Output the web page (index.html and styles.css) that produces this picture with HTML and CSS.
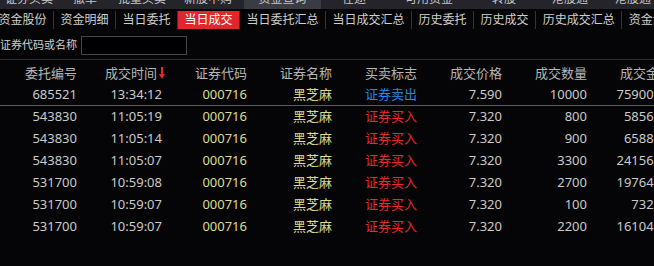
FILE: index.html
```html
<!DOCTYPE html>
<html lang="zh-CN">
<head>
<meta charset="utf-8">
<title>当日成交</title>
<link rel="stylesheet" href="styles.css">
</head>
<body>
<div class="topbar">
  <div class="top-item w58">证券买卖</div>
  <div class="top-item w54">撤单</div>
  <div class="top-item w60">批量买卖</div>
  <div class="top-item w72">新股申购</div>
  <div class="top-item w77 active">资金查询</div>
  <div class="top-item w66">在途</div>
  <div class="top-item w84">可用资金</div>
  <div class="top-item w66">转股</div>
  <div class="top-item w66">港股通</div>
  <div class="top-item w60">港股通</div>
</div>
<div class="tabs">
  <div class="tab">资金股份</div>
  <div class="tab">资金明细</div>
  <div class="tab">当日委托</div>
  <div class="tab active">当日成交</div>
  <div class="tab">当日委托汇总</div>
  <div class="tab">当日成交汇总</div>
  <div class="tab">历史委托</div>
  <div class="tab">历史成交</div>
  <div class="tab">历史成交汇总</div>
  <div class="tab">资金流水</div>
</div>
<div class="search">
  <span class="search-label">证券代码或名称</span>
  <input class="search-input" type="text">
</div>
<div class="grid">
  <div class="row head">
    <div class="cell">委托编号</div>
    <div class="cell">成交时间<svg class="sort" width="6" height="12" viewBox="0 0 6 12"><rect x="2" y="0" width="2" height="8" fill="#e8262a"/><polygon points="0,7 6,7 3,12" fill="#e8262a"/></svg></div>
    <div class="cell">证券代码</div>
    <div class="cell">证券名称</div>
    <div class="cell">买卖标志</div>
    <div class="cell">成交价格</div>
    <div class="cell">成交数量</div>
    <div class="cell">成交金额</div>
  </div>
  <div class="row cur">
    <div class="cell">685521</div><div class="cell">13:34:12</div><div class="cell y">000716</div><div class="cell y">黑芝麻</div><div class="cell sell">证券卖出</div><div class="cell">7.590</div><div class="cell">10000</div><div class="cell">75900.00</div>
  </div>
  <div class="row">
    <div class="cell">543830</div><div class="cell">11:05:19</div><div class="cell y">000716</div><div class="cell y">黑芝麻</div><div class="cell buy">证券买入</div><div class="cell">7.320</div><div class="cell">800</div><div class="cell">5856.00</div>
  </div>
  <div class="row">
    <div class="cell">543830</div><div class="cell">11:05:14</div><div class="cell y">000716</div><div class="cell y">黑芝麻</div><div class="cell buy">证券买入</div><div class="cell">7.320</div><div class="cell">900</div><div class="cell">6588.00</div>
  </div>
  <div class="row">
    <div class="cell">543830</div><div class="cell">11:05:07</div><div class="cell y">000716</div><div class="cell y">黑芝麻</div><div class="cell buy">证券买入</div><div class="cell">7.320</div><div class="cell">3300</div><div class="cell">24156.00</div>
  </div>
  <div class="row">
    <div class="cell">531700</div><div class="cell">10:59:08</div><div class="cell y">000716</div><div class="cell y">黑芝麻</div><div class="cell buy">证券买入</div><div class="cell">7.320</div><div class="cell">2700</div><div class="cell">19764.00</div>
  </div>
  <div class="row">
    <div class="cell">531700</div><div class="cell">10:59:07</div><div class="cell y">000716</div><div class="cell y">黑芝麻</div><div class="cell buy">证券买入</div><div class="cell">7.320</div><div class="cell">100</div><div class="cell">732.00</div>
  </div>
  <div class="row">
    <div class="cell">531700</div><div class="cell">10:59:07</div><div class="cell y">000716</div><div class="cell y">黑芝麻</div><div class="cell buy">证券买入</div><div class="cell">7.320</div><div class="cell">2200</div><div class="cell">16104.00</div>
  </div>
</div>
</body>
</html>
```

FILE: styles.css
```css
html, body {
  margin: 0;
  padding: 0;
  background: #050507;
  width: 654px;
  height: 266px;
  overflow: hidden;
  font-family: "Noto Sans", "Noto Sans CJK SC", sans-serif;
}

.topbar {
  display: flex;
  height: 9px;
  background: #24242a;
  overflow: hidden;
}
.top-item {
  flex: none;
  font-size: 12px;
  line-height: 16px;
  height: 9px;
  overflow: hidden;
  color: #c8c8c8;
  text-align: center;
}
.top-item.active { background: #3b3b43; }
.top-item::before { content: ""; display: block; margin-top: -9px; }
.w54 { width: 54px; }
.w58 { width: 58px; }
.w60 { width: 60px; }
.w66 { width: 66px; }
.w72 { width: 72px; }
.w77 { width: 77px; }
.w84 { width: 84px; }

.tabs {
  display: flex;
  margin-top: 1px;
  margin-left: -8px;
  height: 20px;
  white-space: nowrap;
}
.tab {
  flex: none;
  font-size: 12px;
  line-height: 18px;
  height: 18px;
  margin-top: 1px;
  padding: 0 6.5px;
  color: #cfcfcf;
  border-right: 1px solid #34343a;
}
.tab.active {
  background: #e2262b;
  color: #ffffff;
}

.search {
  display: flex;
  align-items: center;
  height: 20px;
  margin-top: 5px;
}
.search-label {
  font-size: 11px;
  color: #cfcfcf;
  line-height: 20px;
}
.search-input {
  box-sizing: border-box;
  width: 106px;
  height: 19px;
  margin: 0 0 0 4px;
  padding: 0;
  border: 1px solid #45454b;
  background: #000;
  outline: none;
}

.grid {
  margin-top: 4px;
  border-top: 1px solid #2e2e34;
  padding-top: 2px;
  margin-left: -8px;
}
.row {
  display: flex;
  height: 22px;
  white-space: nowrap;
}
.row.cur {
  height: 21px;
  border-bottom: 1px solid #5c5c60;
}
.cell {
  flex: none;
  width: 85px;
  text-align: right;
  font-size: 13px;
  line-height: 21px;
  color: #cacaca;
}
.head .cell { color: #b6b6b6; line-height: 22px; }
.sort {
  margin-left: 2px;
  margin-right: -3px;
  vertical-align: -1px;
}
.y { color: #dcdc8e; }
.buy { color: #e8292e; }
.sell { color: #1f8be6; }
```
